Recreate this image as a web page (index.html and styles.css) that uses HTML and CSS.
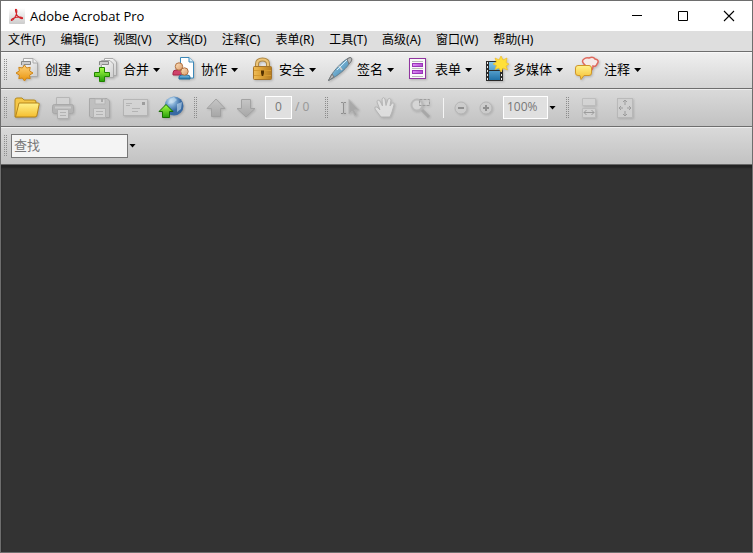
FILE: index.html
```html
<!DOCTYPE html>
<html lang="zh-CN">
<head>
<meta charset="utf-8">
<title>Adobe Acrobat Pro</title>
<link rel="stylesheet" href="styles.css">
</head>
<body>
<div class="window">
  <header class="titlebar">
    <svg class="app-icon" width="16" height="16" viewBox="0 0 16 16"><defs><linearGradient id="app" x2="0" y2="1"><stop stop-color="#fff"/><stop offset="1" stop-color="#ccc"/></linearGradient></defs><rect width="16" height="16" rx="1" fill="url(#app)"/><path d="M6.500 1.500Q8 1 7.800 4Q7.500 7 5.500 10Q3.500 13 2.500 12.500Q1.500 11.500 5 10Q8 8.700 11 9Q14 9.300 13.500 10.500Q12 11 9.500 8.800Q7.500 7 6.800 4Q6.300 2 6.500 1.500Z" fill="none" stroke="#d2232a" stroke-width="1.100"/></svg>
    <h1 class="title">Adobe Acrobat Pro</h1>
    <div class="controls">
      <button class="control" aria-label="最小化"><svg width="12" height="12" viewBox="0 0 12 12"><path d="M1 5.500H11" stroke="#000"/></svg></button>
      <button class="control" aria-label="最大化"><svg width="12" height="12" viewBox="0 0 12 12"><path d="M1.500 1.500H10.500V10.500H1.500Z" stroke="#000" fill="none"/></svg></button>
      <button class="control" aria-label="关闭"><svg width="12" height="12" viewBox="0 0 12 12"><path d="M1 1L11 11M11 1L1 11" stroke="#000" stroke-width="1.100"/></svg></button>
    </div>
  </header>
  <nav class="menubar">
    <button class="menu">文件(F)</button><button class="menu">编辑(E)</button><button class="menu">视图(V)</button><button class="menu">文档(D)</button><button class="menu">注释(C)</button><button class="menu">表单(R)</button><button class="menu">工具(T)</button><button class="menu">高级(A)</button><button class="menu">窗口(W)</button><button class="menu">帮助(H)</button>
  </nav>
  <div class="toolbar tasks">
    <span class="grip"></span>
    <button class="task"><svg width="26" height="28" viewBox="0 0 26 28"><defs><linearGradient id="paper" x2="1" y2="1"><stop stop-color="#fff"/><stop offset="1" stop-color="#ccc"/></linearGradient><linearGradient id="gold" x2="0" y2="1"><stop stop-color="#ffd27a"/><stop offset="1" stop-color="#e8930c"/></linearGradient></defs><path d="M8.500 2.500H18L22.500 7V20.500H8.500Z" fill="url(#paper)" stroke="#aaa"/><path d="M18 2.500V7H22.500" fill="#eee" stroke="#aaa"/><path d="M6.500 9V5.500H15.500V8.500H9" fill="#ccc" stroke="#888"/><path d="M9.500 9L11.700 12L15.200 11.300L14.600 14.900L18 17L14.600 19.100L15.200 22.700L11.700 22L9.500 25L7.300 22L3.800 22.700L4.400 19.100L1 17L4.400 14.900L3.800 11.300L7.300 12Z" fill="url(#gold)" stroke="#cd8418"/></svg><span class="label">创建</span><i class="caret"></i></button>
    <button class="task"><svg width="26" height="28" viewBox="0 0 26 28"><defs><linearGradient id="green" x2="0" y2="1"><stop stop-color="#a9ff46"/><stop offset="1" stop-color="#27a00a"/></linearGradient></defs><path d="M11.500 2.500H20L23.500 6V19.500H11.500Z" fill="url(#paper)" stroke="#aaa"/><path d="M8.500 4.500H17L20.500 8V21.500H8.500Z" fill="url(#paper)" stroke="#aaa"/><path d="M6.500 9V5.500H15.500V8.500H9" fill="#ccc" stroke="#888"/><path d="M6.500 11.500H11.500V16.500H16.500V20.500H11.500V25.500H6.500V20.500H1.500V16.500H6.500Z" fill="url(#green)" stroke="#208400"/></svg><span class="label">合并</span><i class="caret"></i></button>
    <button class="task"><svg width="26" height="28" viewBox="0 0 26 28"><defs><linearGradient id="blue" x2="0" y2="1"><stop stop-color="#83c7ec"/><stop offset="1" stop-color="#2172a8"/></linearGradient><linearGradient id="skin" x2="1" y2="1"><stop stop-color="#ffe4c0"/><stop offset="1" stop-color="#d99a68"/></linearGradient></defs><path d="M9.500 1.500H18L22.500 6V22H9.500Z" fill="#fff" stroke="#3c88b8"/><path d="M18 1.500V6H22.500" fill="#d8eef8" stroke="#3c88b8"/><path d="M2 19V17Q2 14 5 14H10Q12 14 12 17V19Z" fill="#cf426b" stroke="#a52348"/><circle cx="8" cy="10.500" r="3.700" fill="url(#skin)" stroke="#b07040"/><path d="M8 23V21Q8 19 11 19H16Q19 19 19 21V23Z" fill="url(#blue)" stroke="#236c98"/><circle cx="13.500" cy="15.500" r="3.700" fill="url(#skin)" stroke="#b07040"/></svg><span class="label">协作</span><i class="caret"></i></button>
    <button class="task"><svg width="26" height="28" viewBox="0 0 26 28"><defs><linearGradient id="lock"><stop stop-color="#f0bd58"/><stop offset=".4" stop-color="#dda338"/><stop offset="1" stop-color="#b57c20"/></linearGradient></defs><path d="M8 13V8Q8 3.500 13.500 3.500T19 8V13" fill="none" stroke="#ad8745" stroke-width="4"/><path d="M8 13V8Q8 3.500 13.500 3.500T19 8V13" fill="none" stroke="#edc578" stroke-width="2"/><rect x="4.500" y="10.500" width="18" height="13" rx="1" fill="url(#lock)" stroke="#a5742a"/><path d="M5 14.500H22M5 19.500H22" stroke="#d69a30"/><path d="M12 14.500H15V17L14.200 20H12.800L12 17Z" fill="#533100"/></svg><span class="label">安全</span><i class="caret"></i></button>
    <button class="task"><svg width="26" height="28" viewBox="0 0 26 28"><defs><linearGradient id="pen" x2="1" y2="1"><stop stop-color="#d8f2ff"/><stop offset=".5" stop-color="#69a7cb"/><stop offset="1" stop-color="#39718f"/></linearGradient></defs><path d="M1.500 24.500L5 18C10 11 17 4 22 2Q26 1 24 5C20 12 13 18 6 22Z" fill="url(#pen)" stroke="#66808f"/><path d="M1.500 24.500L5 18L7 21ZM20 3L23 1.500Q26 2 24 5.500L22 8Z" fill="#bbb" stroke="#777"/><path d="M12 10L15 14" stroke="#ccc" stroke-width="1.500"/><path d="M20 4L10 14" stroke="#d3eefc"/></svg><span class="label">签名</span><i class="caret"></i></button>
    <button class="task"><svg width="26" height="28" viewBox="0 0 26 28"><defs><linearGradient id="purple"><stop stop-color="#dd8cf4"/><stop offset="1" stop-color="#b24fd2"/></linearGradient></defs><rect x="4.500" y="2.500" width="16" height="20" fill="#fafafa" stroke="#90359f"/><path d="M7 5.500H18M7 12.500H18M7 20.500H18" stroke="#bbb"/><rect x="7.500" y="7.500" width="10" height="3" fill="url(#purple)" stroke="#9a35b8"/><rect x="7.500" y="14.500" width="10" height="3" fill="url(#purple)" stroke="#9a35b8"/></svg><span class="label">表单</span><i class="caret"></i></button>
    <button class="task"><svg width="26" height="28" viewBox="0 0 26 28"><path d="M3 5H20V25H3Z" fill="#2a2a2a"/><path d="M6 6H17V14H6ZM6 15H17V24H6Z" fill="url(#blue)"/><path d="M4.500 6V25M18.500 6V25" stroke="#eee" stroke-dasharray="2 2"/><path d="M18 0L20 4L24 2L23 6.500L26 8L23 10L24.500 14L20 12L18 16L16 12L12 13.500L13.500 9.500L10 8L13.500 6L12 2L16 4Z" fill="#ffe03a" stroke="#f0bd24" stroke-width=".7"/></svg><span class="label">多媒体</span><i class="caret"></i></button>
    <button class="task"><svg width="26" height="28" viewBox="0 0 26 28"><defs><linearGradient id="yellow" x2="0" y2="1"><stop stop-color="#fff28c"/><stop offset="1" stop-color="#f5bd2e"/></linearGradient></defs><path d="M10 8Q7 5 10 3Q12 1 15 2Q19 0 21 3Q26 4 23 8Q22 11 19 10Q19 14 16 15Q17 12 15 10Q12 11 10 8Z" fill="#f5eae8" stroke="#e0685c" stroke-width="1.500"/><path d="M4 9.500H15Q17.500 9.500 17.500 12V17Q17.500 19.500 15 19.500H10L7 23.500L6 19.500H4Q1.500 19.500 1.500 17V12Q1.500 9.500 4 9.500Z" fill="url(#yellow)" stroke="#cf962a"/></svg><span class="label">注释</span><i class="caret"></i></button>
  </div>
  <div class="toolbar tools">
    <span class="grip"></span>
    <button class="tool" aria-label="打开"><svg width="28" height="28" viewBox="0 0 28 28"><path d="M2 23V6Q2 4 4 4H9L11 6H21Q23 6 23 8V22Z" fill="#f5c748" stroke="#b58a1e"/><path d="M6 9L25 9Q27 9 26 11L24 21Q24 23 22 23H2.500Z" fill="url(#yellow)" stroke="#b5841a"/></svg></button>
    <button class="tool faded" aria-label="打印"><svg width="28" height="28" viewBox="0 0 28 28"><path d="M7.500 10V3.500H20.500V10" fill="#d3d3d3" stroke="#aaa"/><rect x="3.500" y="10.500" width="21" height="9" rx="2" fill="#aaa" stroke="#999"/><path d="M6 13.500H22" stroke="#ccc" stroke-width="2"/><path d="M8.500 15.500H19.500V24.500H8.500Z" fill="#d8d8d8" stroke="#a4a4a4"/><path d="M11 18.500H17M11 21.500H17" stroke="#aaa"/></svg></button>
    <button class="tool faded" aria-label="保存"><svg width="28" height="28" viewBox="0 0 28 28"><path d="M4.500 4.500H22L24.500 7V23.500H6L4.500 22Z" fill="#b9b9b9" stroke="#999"/><path d="M10 5H20V10H10Z" fill="#d5d5d5" stroke="#aaa"/><path d="M16 5H18V8H16Z" fill="#999"/><path d="M8.500 14.500H20.500V23.500H8.500Z" fill="#d7d7d7" stroke="#aaa"/><path d="M11 17.500H18M11 20.500H18" stroke="#aaa"/></svg></button>
    <button class="tool faded" aria-label="电子邮件"><svg width="28" height="28" viewBox="0 0 28 28"><rect x="2.500" y="5.500" width="24" height="16" fill="#d5d5d5" stroke="#aaa"/><path d="M5 9.500H11M5 11.500H9M11 14.500H19M11 17.500H17" stroke="#aaa"/><path d="M21 8H24V11H21Z" fill="#888"/></svg></button>
    <button class="tool" aria-label="上传"><svg width="28" height="28" viewBox="0 0 28 28"><defs><radialGradient id="globe" cx=".35" cy=".25"><stop stop-color="#d4e8f7"/><stop offset=".5" stop-color="#78a6d0"/><stop offset="1" stop-color="#386aa3"/></radialGradient></defs><circle cx="17" cy="12" r="9.500" fill="url(#globe)"/><path d="M13 5L17 3L20 6L16 9L11 10ZM20 10L25 8L24 15L20 18Z" fill="#c8e0f0" opacity=".6"/><path d="M9 10.500L16 17.500H12.500V23.500H5.500V17.500H2Z" fill="url(#green)" stroke="#167000"/></svg></button>
    <span class="grip inner"></span>
    <button class="tool narrow faded" aria-label="上一页"><svg width="24" height="28" viewBox="0 0 24 28"><defs><linearGradient id="arrow" x2="0" y2="1"><stop stop-color="#c1c1c1"/><stop offset="1" stop-color="#999"/></linearGradient></defs><path d="M12 5L21 14.500H16.500V22.500H7.500V14.500H3Z" fill="url(#arrow)" stroke="#909090"/></svg></button>
    <button class="tool narrow faded" aria-label="下一页"><svg width="24" height="28" viewBox="0 0 24 28"><path d="M12 23L3 14.500H7.500V5.500H16.500V14.500H21Z" fill="url(#arrow)" stroke="#909090"/></svg></button>
    <input class="field page" type="text" value="0" aria-label="页码"><span class="total">/ 0</span>
    <span class="grip middle"></span>
    <button class="tool faded" aria-label="选择工具"><svg width="28" height="28" viewBox="0 0 28 28"><path d="M5 8.500H7L7.500 9L8 8.500H10M7.500 9V19M5 19.500H7L7.500 19L8 19.500H10" fill="none" stroke="#777"/><path d="M13 5.500V20L16 17L19 22L21 20.500L18.500 16H23Z" fill="#999" stroke="#aaa"/></svg></button>
    <button class="tool faded" aria-label="手形工具"><svg width="28" height="28" viewBox="0 0 28 28"><path d="M9 23L3 15Q2 12 5 13L8 16L5 8Q5 5 8 7L10.500 12L10 5Q11 2 13 5L14 11.500L16 5Q18 3 19 6L18 12L20 9Q23 8 22 11L20 18L18 23Z" fill="#e6e6e6" stroke="#aaa"/></svg></button>
    <button class="tool faded" aria-label="选框缩放"><svg width="28" height="28" viewBox="0 0 28 28"><circle cx="9" cy="11" r="5.500" fill="#d8d8d8" stroke="#b0b0b0" stroke-width="2"/><path d="M14 16L21 23" stroke="#999" stroke-width="3"/><path d="M11.500 5.500H21.500V11.500H11.500Z" fill="none" stroke="#888" stroke-dasharray="3 1"/></svg></button>
    <span class="separator"></span>
    <button class="tool zoom faded" aria-label="缩小"><svg width="16" height="16" viewBox="0 0 16 16"><circle cx="8" cy="8" r="6" fill="#ccc" stroke="#aaa"/><path d="M5 8H11" stroke="#777" stroke-width="2"/></svg></button>
    <button class="tool zoom faded" aria-label="放大"><svg width="16" height="16" viewBox="0 0 16 16"><circle cx="8" cy="8" r="6" fill="#ccc" stroke="#aaa"/><path d="M5 8H11M8 5V11" stroke="#777" stroke-width="2"/></svg></button>
    <input class="field scale" type="text" value="100%" aria-label="缩放比例"><button class="drop" aria-label="缩放选项"><i class="caret"></i></button>
    <span class="grip last"></span>
    <button class="tool faded" aria-label="适合宽度"><svg width="28" height="28" viewBox="0 0 28 28"><path d="M7.500 4.500H20.500V11.500H7.500ZM7.500 14.500H20.500V23.500H7.500Z" fill="#d5d5d5" stroke="#b5b5b5"/><path d="M9 18.500H19M11.500 16L9 18.500L11.500 21M16.500 16L19 18.500L16.500 21" fill="none" stroke="#888"/></svg></button>
    <button class="tool faded" aria-label="适合页面"><svg width="28" height="28" viewBox="0 0 28 28"><rect x="6.500" y="4.500" width="15" height="19" fill="#d0d0d0" stroke="#b0b0b0"/><path d="M14 6V11M14 17V22M8 14H12M16 14H20M12 8L14 6L16 8M12 20L14 22L16 20M10 12L8 14L10 16M18 12L20 14L18 16" fill="none" stroke="#888"/></svg></button>
  </div>
  <div class="toolbar search">
    <span class="grip"></span>
    <input class="find" type="text" placeholder="查找" aria-label="查找"><button class="drop" aria-label="查找选项"><i class="caret"></i></button>
  </div>
  <main class="workspace"></main>
</div>
</body>
</html>
```
FILE: styles.css
```css
* { box-sizing: border-box; }
body { margin: 0; font-family: "Noto Sans", "Noto Sans CJK SC", sans-serif; color: #000; }
button { border: 0; padding: 0; background: none; font: inherit; color: inherit; }
svg { display: block; flex: none; }
.window { display: flex; flex-direction: column; height: 100vh; border: 1px solid #6e6e6e; background: #333; }
.titlebar { display: flex; align-items: center; height: 30px; padding-left: 8px; background: #fff; flex: none; }
.title { margin: 0 0 0 5px; font-size: 12px; font-family: "Open Sans", sans-serif; font-size: 13px; font-weight: 400; line-height: 16px; white-space: nowrap; }
.controls { display: flex; margin-left: auto; }
.control { display: flex; align-items: center; justify-content: center; width: 46px; height: 30px; }
.menubar { display: flex; gap: 15px; height: 20px; padding-left: 7px; background: #dedede; flex: none; }
.menu { font-size: 12px; line-height: 18px; white-space: nowrap; height: 18px; }
.toolbar { display: flex; align-items: center; height: 38px; border-top: 1px solid #6e6e6e; background: linear-gradient(#f0f0f0, #d5d5d5); box-shadow: inset 0 1px #f8f8f8; flex: none; }
.tasks { height: 37px; }
.tools, .search { background: linear-gradient(#dadada, #c2c2c2); box-shadow: inset 0 1px #eee; }
.grip { flex: none; width: 3px; height: 22px; margin-left: 3px; background: repeating-linear-gradient(#8c8c8c 0 1px, transparent 1px 2px) 0 0 / 1px 100% no-repeat, repeating-linear-gradient(#8c8c8c 0 1px, transparent 1px 2px) 2px 0 / 1px 100% no-repeat; }
.tasks .grip { margin-right: 8px; }
.task { display: flex; align-items: center; height: 28px; margin-right: 11px; }
.task svg, .tool svg { filter: drop-shadow(1px 1px 1px rgba(0, 0, 0, 0.2)); }
.faded { opacity: 0.7; }
.label { margin: 0 4px; padding-bottom: 2px; font-size: 13px; line-height: 18px; white-space: nowrap; }
.caret { flex: none; width: 7px; height: 4px; background: #000; clip-path: polygon(0 0, 100% 0, 50% 100%); }
.tool { display: flex; align-items: center; justify-content: center; flex: none; width: 36px; height: 28px; }
.tools .grip + .tool { margin-left: 2px; }
.tools .inner { margin-left: 5px; }
.tools .inner + .narrow { margin-left: 4px; }
.narrow { width: 30px; }
.zoom { width: 25px; }
.field { height: 23px; padding: 0 0 2px; border: 1px solid #fff; background: #e0e0e0; color: #777; font: 12px/19px "Open Sans", sans-serif; }
.page { width: 27px; margin-left: 4px; text-align: center; }
.total { width: 18px; margin-left: 3px; padding-bottom: 2px; color: #999; font-size: 12px; line-height: 18px; white-space: nowrap; }
.tools .middle { margin-left: 12px; }
.tools .middle + .tool { margin-left: 4px; }
.separator { width: 1px; height: 20px; margin: 0 4px 0 3px; background: #f5f5f5; }
.scale { width: 45px; margin-left: 5px; padding-left: 3px; }
.drop { display: flex; align-items: center; justify-content: center; width: 9px; height: 22px; }
.tools .last { margin-left: 9px; }
.find { width: 117px; height: 24px; margin-left: 4px; padding: 0 2px 2px; border: 1px solid #777; background: #f4f4f4; font: 13px/20px "Noto Sans", "Noto Sans CJK SC", sans-serif; }
.find::placeholder { color: #777; opacity: 1; }
.workspace { flex: 1; border-top: 1px solid #666; background: #333; box-shadow: inset 0 3px 2px #222; }
```
